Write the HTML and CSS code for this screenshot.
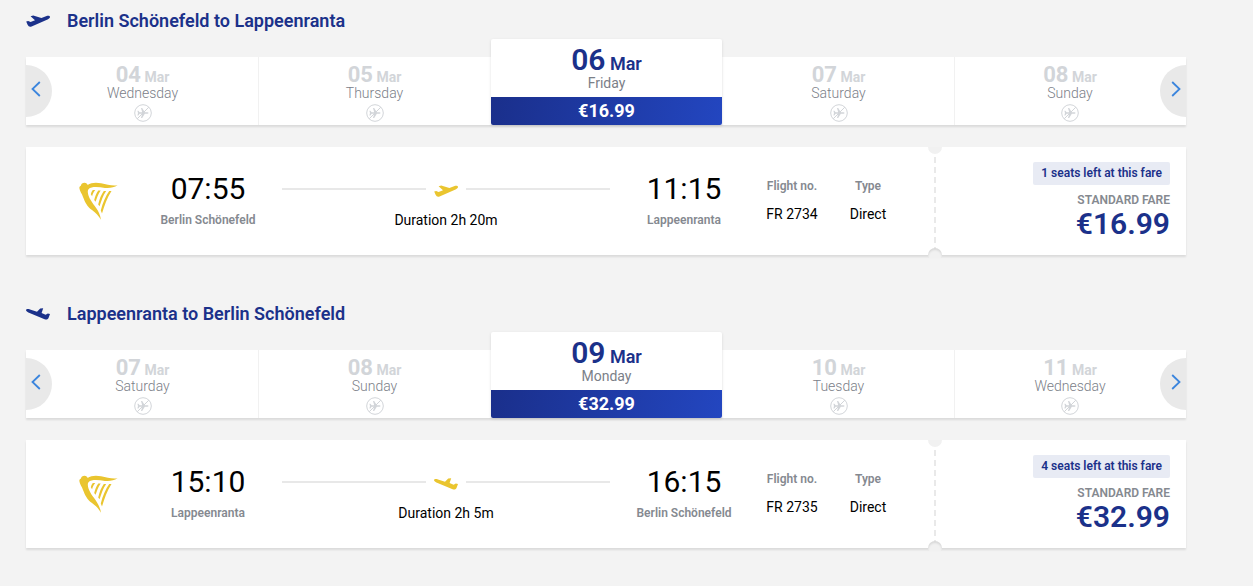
FILE: index.html
```
<!DOCTYPE html>
<html lang="en">
<head>
    <meta charset="UTF-8">
    <meta name="viewport" content="width=device-width, initial-scale=1.0">
    <title>Select flights</title>
    <link rel="stylesheet" href="styles.css">
</head>
<body>
    <!-- Shared icons -->
    <svg class="icon-defs">
        <symbol id="plane" viewBox="0 0 24 12">
            <path d="M.2 6.6 2.2 5.9 4.6 6.9 9 5.3 4.6 1.3 7.2.5 15.4 3 20 1.3C22 .6 23.7.7 24 1.9 24.2 3.2 22.2 4.4 20.4 5.1L5.6 11.5C3.6 12.2 2.5 11.6 1.6 9.8Z"/>
        </symbol>
        <symbol id="plane-in" viewBox="0 0 24 12">
            <path d="M0 1.9C.4.9 2.2.8 4 1.4L11 3.7 14.2.6 17.2.3 15.6 5 19.6 6.7 21.8 5.4 24 5.9 22.7 9.6C22 11.6 20.5 12 18.6 11.3L3.6 5.1C1.8 4.3-.2 3.2 0 1.9Z"/>
        </symbol>
        <symbol id="no-flight" viewBox="0 0 18 18">
            <circle cx="9" cy="9" r="8.3" fill="none" stroke="currentColor"/>
            <path d="M3.4 6.7h1l1.2 1.6h2.6L7 4h1.2l2.6 4.3h2.6c1.5 0 1.5 1.5 0 1.5h-2.6L8.2 14H7l1.200-4.200H5.600l-1.200 1.600h-1L4 9Z"/>
            <path d="M3.200 14.800 14.800 3.200" stroke="currentColor"/>
        </symbol>
        <symbol id="harp" viewBox="0 0 39 38">
            <path d="M4.500.9C6.800.5 8.300 1.600 8.600 3 12 .6 17 0 22 1.300 28 2.800 33 3.900 38.600 3.300 35 5.400 31 6.400 26 5.900 19 5 12.500 4.300 9.500 7.200 7.800 9.500 9.500 14 11.500 17.800 14.500 23.500 20.500 28 22 37.800 19.500 33.500 17 31 13 28 8 24.500 6 20 4 15 3 11.500.6 9 .4 6.200 0 4.500 1.400 4 2 3.500 2.200 2 3 1.200 4.500.9Z"/>
            <path d="M13.800 8h2.500c-1.800 1.900-2.500 4-3.200 6.200l-1.300-2c.5-1.800 1.100-3 2-4.200ZM19.300 8.500h2.400c-2.700 3.400-3.600 7.500-5.200 11.300L15.200 18c1-3.800 2.200-7 4.100-9.500ZM24.800 8.900h2.400c-3.300 4.500-4.700 9.800-6.700 15.400L19.200 22.400c1.200-5.400 3-9.800 5.600-13.500ZM30.200 9h2.300c-4.500 6.500-7 14.500-9.500 22.500l-1.200-3C23.700 20.500 26.700 14 30.200 9Z"/>
        </symbol>
        <symbol id="chevron" viewBox="0 0 10 16">
            <path d="M8.800 1 1.500 8l7.300 7" fill="none" stroke="currentColor" stroke-width="1.800"/>
        </symbol>
    </svg>

    <main class="trip">
        <section class="journey">
            <h2 class="journey-title">
                <svg class="plane"><use href="#plane"/></svg>
                Berlin Schönefeld to Lappeenranta
            </h2>

            <div class="dates">
                <button class="arrow prev"><svg><use href="#chevron"/></svg></button>
                <div class="day">
                    <div class="date"><b>04</b> Mar</div>
                    <div class="weekday">Wednesday</div>
                    <svg class="no-flight"><use href="#no-flight"/></svg>
                </div>
                <div class="day">
                    <div class="date"><b>05</b> Mar</div>
                    <div class="weekday">Thursday</div>
                    <svg class="no-flight"><use href="#no-flight"/></svg>
                </div>
                <div class="day active">
                    <div class="date"><b>06</b> Mar</div>
                    <div class="weekday">Friday</div>
                    <div class="day-price">€16.99</div>
                </div>
                <div class="day">
                    <div class="date"><b>07</b> Mar</div>
                    <div class="weekday">Saturday</div>
                    <svg class="no-flight"><use href="#no-flight"/></svg>
                </div>
                <div class="day">
                    <div class="date"><b>08</b> Mar</div>
                    <div class="weekday">Sunday</div>
                    <svg class="no-flight"><use href="#no-flight"/></svg>
                </div>
                <button class="arrow next"><svg><use href="#chevron"/></svg></button>
            </div>

            <div class="flight">
                <svg class="harp"><use href="#harp"/></svg>
                <div class="stop">
                    <div class="time">07:55</div>
                    <div class="city">Berlin Schönefeld</div>
                </div>
                <div class="route">
                    <div class="route-line"><svg class="plane"><use href="#plane"/></svg></div>
                    <div class="duration">Duration 2h 20m</div>
                </div>
                <div class="stop arrival">
                    <div class="time">11:15</div>
                    <div class="city">Lappeenranta</div>
                </div>
                <div class="info number">
                    <div class="label">Flight no.</div>
                    <div>FR 2734</div>
                </div>
                <div class="info type">
                    <div class="label">Type</div>
                    <div>Direct</div>
                </div>
                <div class="divider"></div>
                <div class="fare">
                    <div class="seats">1 seats left at this fare</div>
                    <div class="fare-name">STANDARD FARE</div>
                    <div class="fare-price">€16.99</div>
                </div>
            </div>
        </section>

        <section class="journey">
            <h2 class="journey-title">
                <svg class="plane"><use href="#plane-in"/></svg>
                Lappeenranta to Berlin Schönefeld
            </h2>

            <div class="dates">
                <button class="arrow prev"><svg><use href="#chevron"/></svg></button>
                <div class="day">
                    <div class="date"><b>07</b> Mar</div>
                    <div class="weekday">Saturday</div>
                    <svg class="no-flight"><use href="#no-flight"/></svg>
                </div>
                <div class="day">
                    <div class="date"><b>08</b> Mar</div>
                    <div class="weekday">Sunday</div>
                    <svg class="no-flight"><use href="#no-flight"/></svg>
                </div>
                <div class="day active">
                    <div class="date"><b>09</b> Mar</div>
                    <div class="weekday">Monday</div>
                    <div class="day-price">€32.99</div>
                </div>
                <div class="day">
                    <div class="date"><b>10</b> Mar</div>
                    <div class="weekday">Tuesday</div>
                    <svg class="no-flight"><use href="#no-flight"/></svg>
                </div>
                <div class="day">
                    <div class="date"><b>11</b> Mar</div>
                    <div class="weekday">Wednesday</div>
                    <svg class="no-flight"><use href="#no-flight"/></svg>
                </div>
                <button class="arrow next"><svg><use href="#chevron"/></svg></button>
            </div>

            <div class="flight">
                <svg class="harp"><use href="#harp"/></svg>
                <div class="stop">
                    <div class="time">15:10</div>
                    <div class="city">Lappeenranta</div>
                </div>
                <div class="route">
                    <div class="route-line"><svg class="plane"><use href="#plane-in"/></svg></div>
                    <div class="duration">Duration 2h 5m</div>
                </div>
                <div class="stop arrival">
                    <div class="time">16:15</div>
                    <div class="city">Berlin Schönefeld</div>
                </div>
                <div class="info number">
                    <div class="label">Flight no.</div>
                    <div>FR 2735</div>
                </div>
                <div class="info type">
                    <div class="label">Type</div>
                    <div>Direct</div>
                </div>
                <div class="divider"></div>
                <div class="fare">
                    <div class="seats">4 seats left at this fare</div>
                    <div class="fare-name">STANDARD FARE</div>
                    <div class="fare-price">€32.99</div>
                </div>
            </div>
        </section>
    </main>
</body>
</html>
```
FILE: styles.css
```
* {
    box-sizing: border-box;
}

body {
    margin: 0;
    background: #f3f3f3;
    color: #000;
    font-family: Roboto, Arial, sans-serif;
    font-size: 14px;
}

svg {
    display: block;
    fill: currentColor;
}

.icon-defs {
    display: none;
}

.trip {
    width: 1160px;
    margin-left: 26px;
}

.journey {
    height: 293px;
}

.journey-title {
    display: flex;
    align-items: center;
    gap: 17px;
    height: 41px;
    margin: 0 0 16px;
    color: #1b318a;
    font-size: 18px;
    font-weight: 600;
}

.plane {
    width: 24px;
    height: 12px;
}

/* Date carousel */
.dates {
    position: relative;
    display: grid;
    grid-template-rows: 68px;
    grid-template-columns: repeat(5, 1fr);
    align-items: end;
    height: 68px;
    margin-bottom: 22px;
    background: #fff;
    box-shadow: 0 2px 2px rgba(0, 0, 0, .1);
}

.day {
    display: flex;
    flex-direction: column;
    align-items: center;
    height: 68px;
    padding-top: 7px;
    padding-left: 1px;
    color: #d2d5d9;
}

.day + .day {
    padding-left: 0;
    border-left: 1px solid #f1f1f1;
}

.day:last-of-type {
    padding-right: 1px;
}

.date {
    height: 21px;
    line-height: 22px;
    font-weight: 700;
}

.date b {
    font-size: 22px;
    font-weight: 700;
}

.weekday {
    height: 16px;
    line-height: 16px;
    color: #7b8088;
    font-weight: 300;
}

.no-flight {
    width: 18px;
    height: 18px;
    margin-top: 3px;
}

.day.active {
    height: 86px;
    margin-left: 1px;
    padding-top: 5px;
    border: none;
    border-radius: 2px;
    background: #fff;
    box-shadow: 0 1px 3px rgba(0, 0, 0, .12);
    color: #1b318a;
}

.active .date {
    height: 31px;
    line-height: 32px;
    font-size: 18px;
    font-weight: 600;
}

.active .date b {
    font-size: 30px;
    font-weight: 600;
}

.active .weekday {
    font-weight: 400;
}

.day-price {
    width: 100%;
    height: 28px;
    margin-top: auto;
    border-radius: 0 0 2px 2px;
    background: linear-gradient(100deg, #1a2f8b, #2346c0);
    color: #fff;
    font-size: 18px;
    font-weight: 700;
    line-height: 28px;
    text-align: center;
}

.arrow {
    position: absolute;
    top: 8px;
    width: 26px;
    height: 52px;
    padding: 0;
    border: none;
    background: #e9e9e9;
    color: #3b85dd;
}

.arrow svg {
    width: 10px;
    height: 16px;
    margin: -4px 0 0 5px;
}

.prev {
    left: 0;
    border-radius: 0 26px 26px 0;
}

.next {
    right: 0;
    border-radius: 26px 0 0 26px;
}

.next svg {
    margin-left: 11px;
    transform: scaleX(-1);
}

/* Flight card */
.flight {
    display: flex;
    height: 108px;
    background: #fff;
    box-shadow: 0 2px 2px rgba(0, 0, 0, .1);
}

.harp {
    width: 39px;
    height: 38px;
    margin: 35px 26px 0 53px;
    color: #eac52f;
}

.stop {
    width: 128px;
    padding-top: 24px;
    text-align: center;
}

.time {
    height: 35px;
    font-size: 30px;
    line-height: 35px;
}

.city {
    margin-top: 6px;
    color: #858990;
    font-size: 12px;
    font-weight: 600;
    line-height: 16px;
}

.route {
    width: 328px;
    margin-left: 10px;
    padding-top: 34px;
    text-align: center;
}

.route-line {
    display: flex;
    align-items: center;
    gap: 8px;
    height: 16px;
    color: #eac52f;
}

.route-line::before,
.route-line::after {
    content: "";
    flex: 1;
    height: 2px;
    background: #e8e8e8;
}

.route-line .plane {
    margin-top: 4px;
}

.duration {
    margin-top: 15px;
    line-height: 16px;
}

.arrival {
    margin-left: 10px;
}

.info {
    padding-top: 31px;
    line-height: 16px;
    text-align: center;
}

.number {
    width: 54px;
    margin-left: 17px;
}

.type {
    width: 40px;
    margin-left: 29px;
}

.label {
    margin-bottom: 12px;
    color: #858990;
    font-size: 12px;
    font-weight: 600;
}

.divider {
    position: relative;
    width: 2px;
    margin-left: 46px;
    background: repeating-linear-gradient(#e9e9e9 0 6px, #fff 6px 10px);
}

/* ticket notches */
.divider::before,
.divider::after {
    content: "";
    position: absolute;
    left: -6px;
    width: 14px;
    height: 7px;
    background: #f1f1f1;
}

.divider::before {
    top: 0;
    border-radius: 0 0 7px 7px;
}

.divider::after {
    bottom: -3px;
    height: 10px;
    border-radius: 7px 7px 0 0;
    box-shadow: inset 0 2px 2px rgba(0, 0, 0, .1);
}

.fare {
    display: flex;
    flex: 1;
    flex-direction: column;
    align-items: flex-end;
    padding: 15px 16px 0 0;
}

.seats {
    height: 23px;
    padding: 0 8px;
    border-radius: 2px;
    background: #e8ebf4;
    color: #1b318a;
    font-size: 12px;
    font-weight: 600;
    line-height: 22px;
}

.fare-name {
    margin-top: 7px;
    color: #858990;
    font-size: 12px;
    font-weight: 600;
    line-height: 16px;
}

.fare-price {
    color: #1b318a;
    font-size: 30px;
    font-weight: 600;
    line-height: 32px;
}
```
